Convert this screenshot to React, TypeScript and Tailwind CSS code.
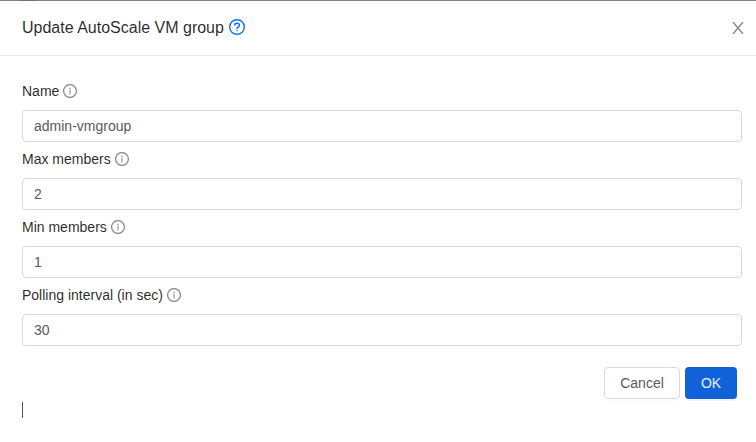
import React from "react";

function InfoIcon() {
  return (
    <svg viewBox="0 0 14 14" className="size-3.5 shrink-0" fill="none" aria-hidden="true">
      <circle cx="7" cy="7" r="6.400" stroke="#8c8c8c" strokeWidth="1.250" />
      <path d="M6 4.500h2M7 6v4.400" stroke="#b0b0b0" strokeWidth="1.600" />
    </svg>
  );
}

function HelpIcon() {
  return (
    <svg viewBox="0 0 16 16" className="size-4 shrink-0" fill="none" aria-hidden="true">
      <circle cx="8" cy="8" r="7.300" stroke="#0b6ff2" strokeWidth="1.400" />
      <path d="M5.600 6.400C5.600 4.900 6.700 4.200 8 4.200s2.400.8 2.400 2.100c0 1-.6 1.500-1.300 1.900-.7.400-1.100.8-1.100 1.700" stroke="#0b6ff2" strokeWidth="1.400" />
      <path d="M7 11.500h2" stroke="#73adf7" strokeWidth="1.400" />
    </svg>
  );
}

const fields = [
  { label: "Name", value: "admin-vmgroup" },
  { label: "Max members", value: "2" },
  { label: "Min members", value: "1" },
  { label: "Polling interval (in sec)", value: "30" },
];

export default function App() {
  return (
    <div className="h-[442px] w-full overflow-hidden bg-white font-['Liberation_Sans',Arial,sans-serif] text-sm text-black/85">
      <div className="h-px bg-[#808080] pl-[21px]">
        <div className="h-px w-3.5 bg-[#717171]" />
      </div>
      <header className="flex h-[55px] items-center justify-between border-b border-[#ebebeb] pr-3 pl-[22px]">
        <h1 className="flex items-center gap-[5px] text-base leading-[22px]">
          Update AutoScale VM group
          <span className="pb-0.5"><HelpIcon /></span>
        </h1>
        <button aria-label="Close">
          <svg viewBox="0 0 12 12" className="size-3" fill="none" stroke="#8c8c8c" strokeWidth="1.500">
            <path d="M1 0 11 12M11 0 1 12" />
          </svg>
        </button>
      </header>
      <form className="pr-3.5 pl-[22px] pt-[22px]">
        {fields.map(({ label, value }) => (
          <label key={label} className="block h-[68px]">
            <span className="flex h-8 items-start gap-1 pt-0.5 leading-[22px]">
              {label}
              <span className="pt-1"><InfoIcon /></span>
            </span>
            <input
              className="block h-8 w-full rounded-[4px] border border-[#d9d9d9] px-[11px] text-sm text-[#595959] outline-none"
              defaultValue={value}
            />
          </label>
        ))}
        <div className="flex justify-end gap-[5px] pt-[17px] pr-[5px]">
          <button type="button" className="h-8 w-[76px] rounded-[4px] border border-[#d9d9d9] text-[#595959] shadow-[0_2px_0_rgba(0,0,0,0.015)]">Cancel</button>
          <button type="button" className="h-8 w-[52px] rounded-[4px] bg-[#1162d9] text-white/90 shadow-[0_2px_0_rgba(0,0,0,0.045)]">OK</button>
        </div>
        <div className="mt-[3px] h-4 w-px bg-[#505050]" />
      </form>
    </div>
  );
}
